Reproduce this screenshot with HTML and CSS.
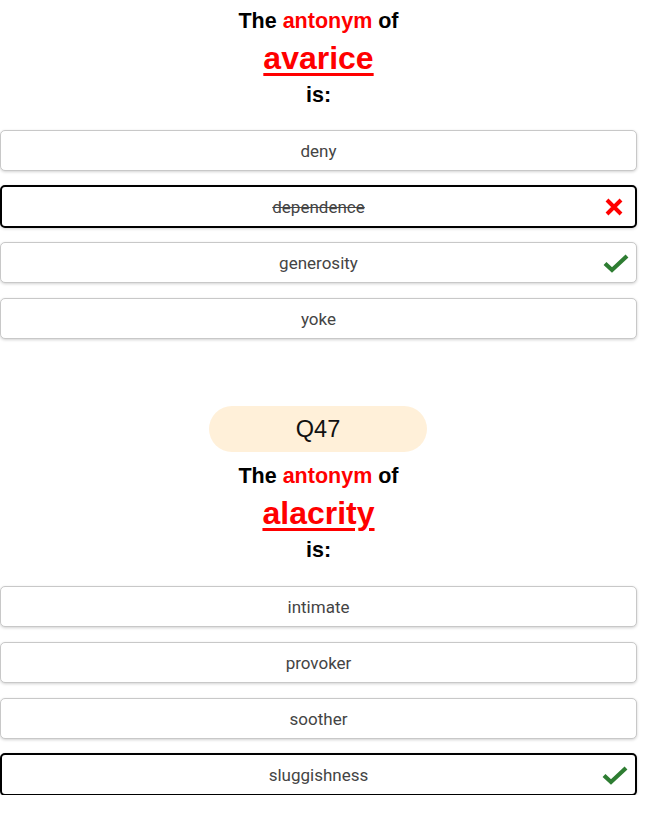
FILE: index.html
```html
<!DOCTYPE html>
<html>
<head>
<meta charset="utf-8">
<link rel="stylesheet" href="styles.css">
</head>
<body>
<div class="quiz">
  <section class="question first">
    <div class="heading">
      <div class="prompt">The <span class="hl">antonym</span> of</div>
      <div class="word">avarice</div>
      <div class="prompt is">is:</div>
    </div>
    <div class="options">
      <div class="option">deny</div>
      <div class="option selected wrong"><span class="struck">dependence</span>
        <svg class="icon" viewBox="0 0 20 20" width="20" height="20"><path d="M3 3 L17 17 M17 3 L3 17" stroke="#ff0000" stroke-width="4" fill="none"/></svg>
      </div>
      <div class="option">generosity
        <svg class="icon check" viewBox="0 0 26 20" width="26" height="20"><path d="M2 10.5 L9 17 L24 3" stroke="#2e7d32" stroke-width="4.2" fill="none"/></svg>
      </div>
      <div class="option">yoke</div>
    </div>
  </section>

  <section class="question">
    <div class="qnum">Q47</div>
    <div class="heading">
      <div class="prompt">The <span class="hl">antonym</span> of</div>
      <div class="word">alacrity</div>
      <div class="prompt is">is:</div>
    </div>
    <div class="options">
      <div class="option">intimate</div>
      <div class="option">provoker</div>
      <div class="option">soother</div>
      <div class="option selected">sluggishness
        <svg class="icon check" viewBox="0 0 26 20" width="26" height="20"><path d="M2 10.5 L9 17 L24 3" stroke="#2e7d32" stroke-width="4.2" fill="none"/></svg>
      </div>
    </div>
  </section>
</div>
</body>
</html>
```

FILE: styles.css
```css
html, body {
  margin: 0;
  padding: 0;
  background: #ffffff;
}

body {
  font-family: "Liberation Sans", Arial, sans-serif;
}

.quiz {
  width: 637px;
  display: flex;
  flex-direction: column;
}

.question {
  display: flex;
  flex-direction: column;
  align-items: stretch;
}

.question.first {
  padding-top: 5px;
}

.question + .question {
  margin-top: 67px;
}

.question + .question .options {
  margin-top: 21px;
}

.qnum {
  align-self: center;
  width: 218px;
  height: 46px;
  border-radius: 23px;
  background: #fff0d9;
  color: #111;
  font-size: 23.5px;
  line-height: 46px;
  text-align: center;
  margin-bottom: 8px;
  margin-left: -1px;
}

.heading {
  padding-top: 2px;
  text-align: center;
  color: #000;
  font-weight: bold;
}

.prompt {
  font-size: 21.5px;
  line-height: 28px;
}

.prompt.is {
  line-height: 30px;
}

.hl {
  color: #ff0000;
}

.word {
  padding-top: 1px;
  font-size: 32px;
  line-height: 44px;
  color: #ff0000;
  text-decoration: underline;
  text-decoration-thickness: 3px;
  text-underline-offset: 4px;
}

.options {
  margin-top: 20px;
  display: flex;
  flex-direction: column;
  gap: 15px;
}

.option {
  position: relative;
  height: 39px;
  border: 1px solid #c8c8c8;
  border-radius: 5px;
  box-shadow: 0 1px 3px rgba(0, 0, 0, 0.18);
  display: flex;
  align-items: center;
  justify-content: center;
  font-family: Roboto, "Liberation Sans", sans-serif;
  font-size: 17px;
  color: #444;
  background: #fff;
}

.option.selected {
  border: 2px solid #000;
  margin: -1px 0;
}

.struck {
  text-decoration: line-through;
}

.icon {
  position: absolute;
  right: 11px;
  top: 50%;
  transform: translateY(-50%);
}

.icon.check {
  right: 7px;
}
```
